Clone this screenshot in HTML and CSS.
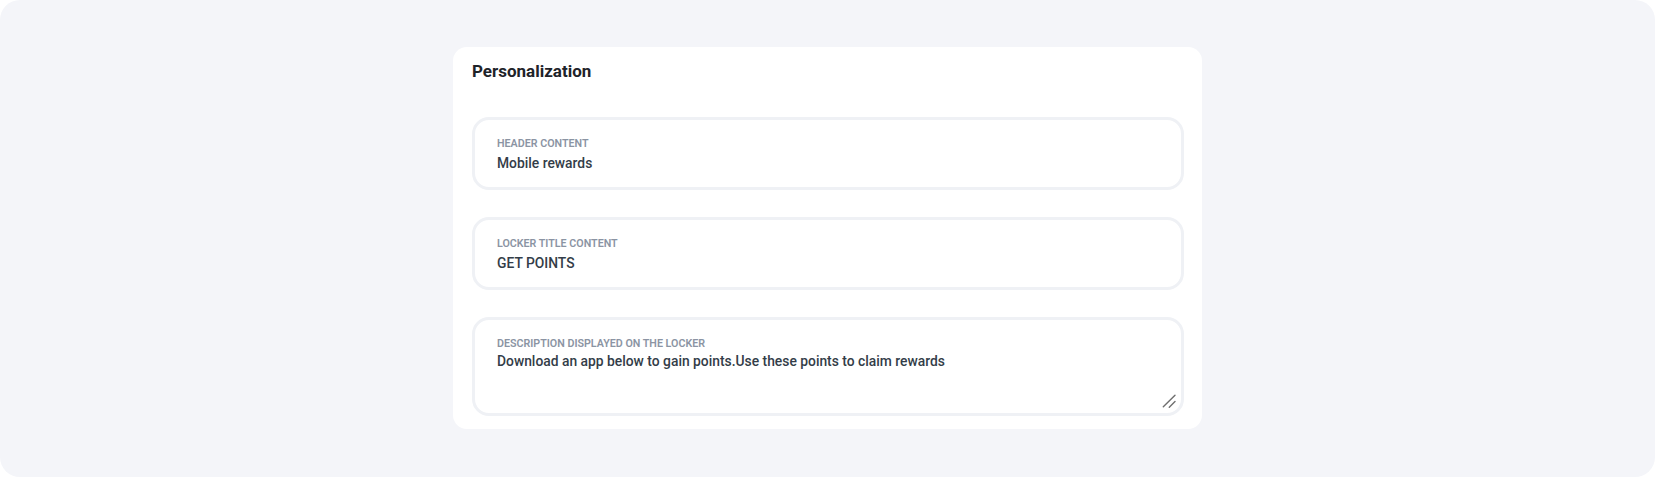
FILE: index.html
```html
<!DOCTYPE html>
<html lang="en">
<head>
<meta charset="utf-8">
<title>Personalization</title>
<link rel="stylesheet" href="styles.css">
</head>
<body>
<div class="page">
  <section class="card">
    <h2 class="card-title">Personalization</h2>
    <div class="fields">
      <label class="field">
        <span class="field-label">Header content</span>
        <input class="field-input" type="text" value="Mobile rewards">
      </label>
      <label class="field">
        <span class="field-label">Locker title content</span>
        <input class="field-input" type="text" value="GET POINTS">
      </label>
      <label class="field field-area">
        <span class="field-label">Description displayed on the locker</span>
        <textarea class="field-textarea">Download an app below to gain points.Use these points to claim rewards</textarea>
        <svg class="resize-handle" width="14" height="14" viewBox="0 0 14 14" aria-hidden="true">
          <line x1="1.3" y1="12.8" x2="13" y2="1.2" />
          <line x1="7.3" y1="13.2" x2="13" y2="7.6" />
        </svg>
      </label>
    </div>
  </section>
</div>
</body>
</html>
```

FILE: styles.css
```css
* { box-sizing: border-box; }

html, body {
  margin: 0;
  padding: 0;
  background: #ffffff;
}

body {
  font-family: Roboto, "Liberation Sans", Arial, sans-serif;
}

.page {
  width: 1655px;
  height: 477px;
  background: #f4f5f9;
  border-radius: 20px;
  padding-top: 47px;
  display: flex;
  justify-content: center;
  align-items: flex-start;
}

.card {
  width: 749px;
  background: #ffffff;
  border-radius: 14px;
  padding: 12px 18px 13px 19px;
}

.card-title {
  margin: 0;
  font-size: 17px;
  line-height: 24px;
  font-weight: 700;
  color: #1e2329;
}

.fields {
  margin-top: 34px;
  display: flex;
  flex-direction: column;
  gap: 27px;
}

.field {
  display: flex;
  flex-direction: column;
  border: 3px solid #eff1f5;
  border-radius: 17px;
  padding: 17px 22px 14px 22px;
  background: #ffffff;
}

.field-label {
  display: block;
  font-size: 10.7px;
  line-height: 14px;
  font-weight: 600;
  text-transform: uppercase;
  color: #8b94a3;
  margin-bottom: 2px;
}

.field-input,
.field-textarea {
  display: block;
  width: 100%;
  border: 0;
  outline: none;
  margin: 0;
  padding: 0;
  background: transparent;
  font-family: Roboto, "Liberation Sans", Arial, sans-serif;
  font-size: 13.85px;
  line-height: 20px;
  height: 20px;
  font-weight: 500;
  color: #333d48;
}

.field-area {
  position: relative;
  padding: 17px 0 0 0;
}

.field-area .field-label {
  margin-left: 22px;
  margin-bottom: 0;
}

.field-textarea {
  height: 62px;
  padding: 0 22px;
  resize: none;
  overflow: hidden;
}

.resize-handle {
  position: absolute;
  right: 5px;
  bottom: 5px;
  stroke: #6f6f6f;
  stroke-width: 1.4;
  stroke-linecap: round;
}
```
